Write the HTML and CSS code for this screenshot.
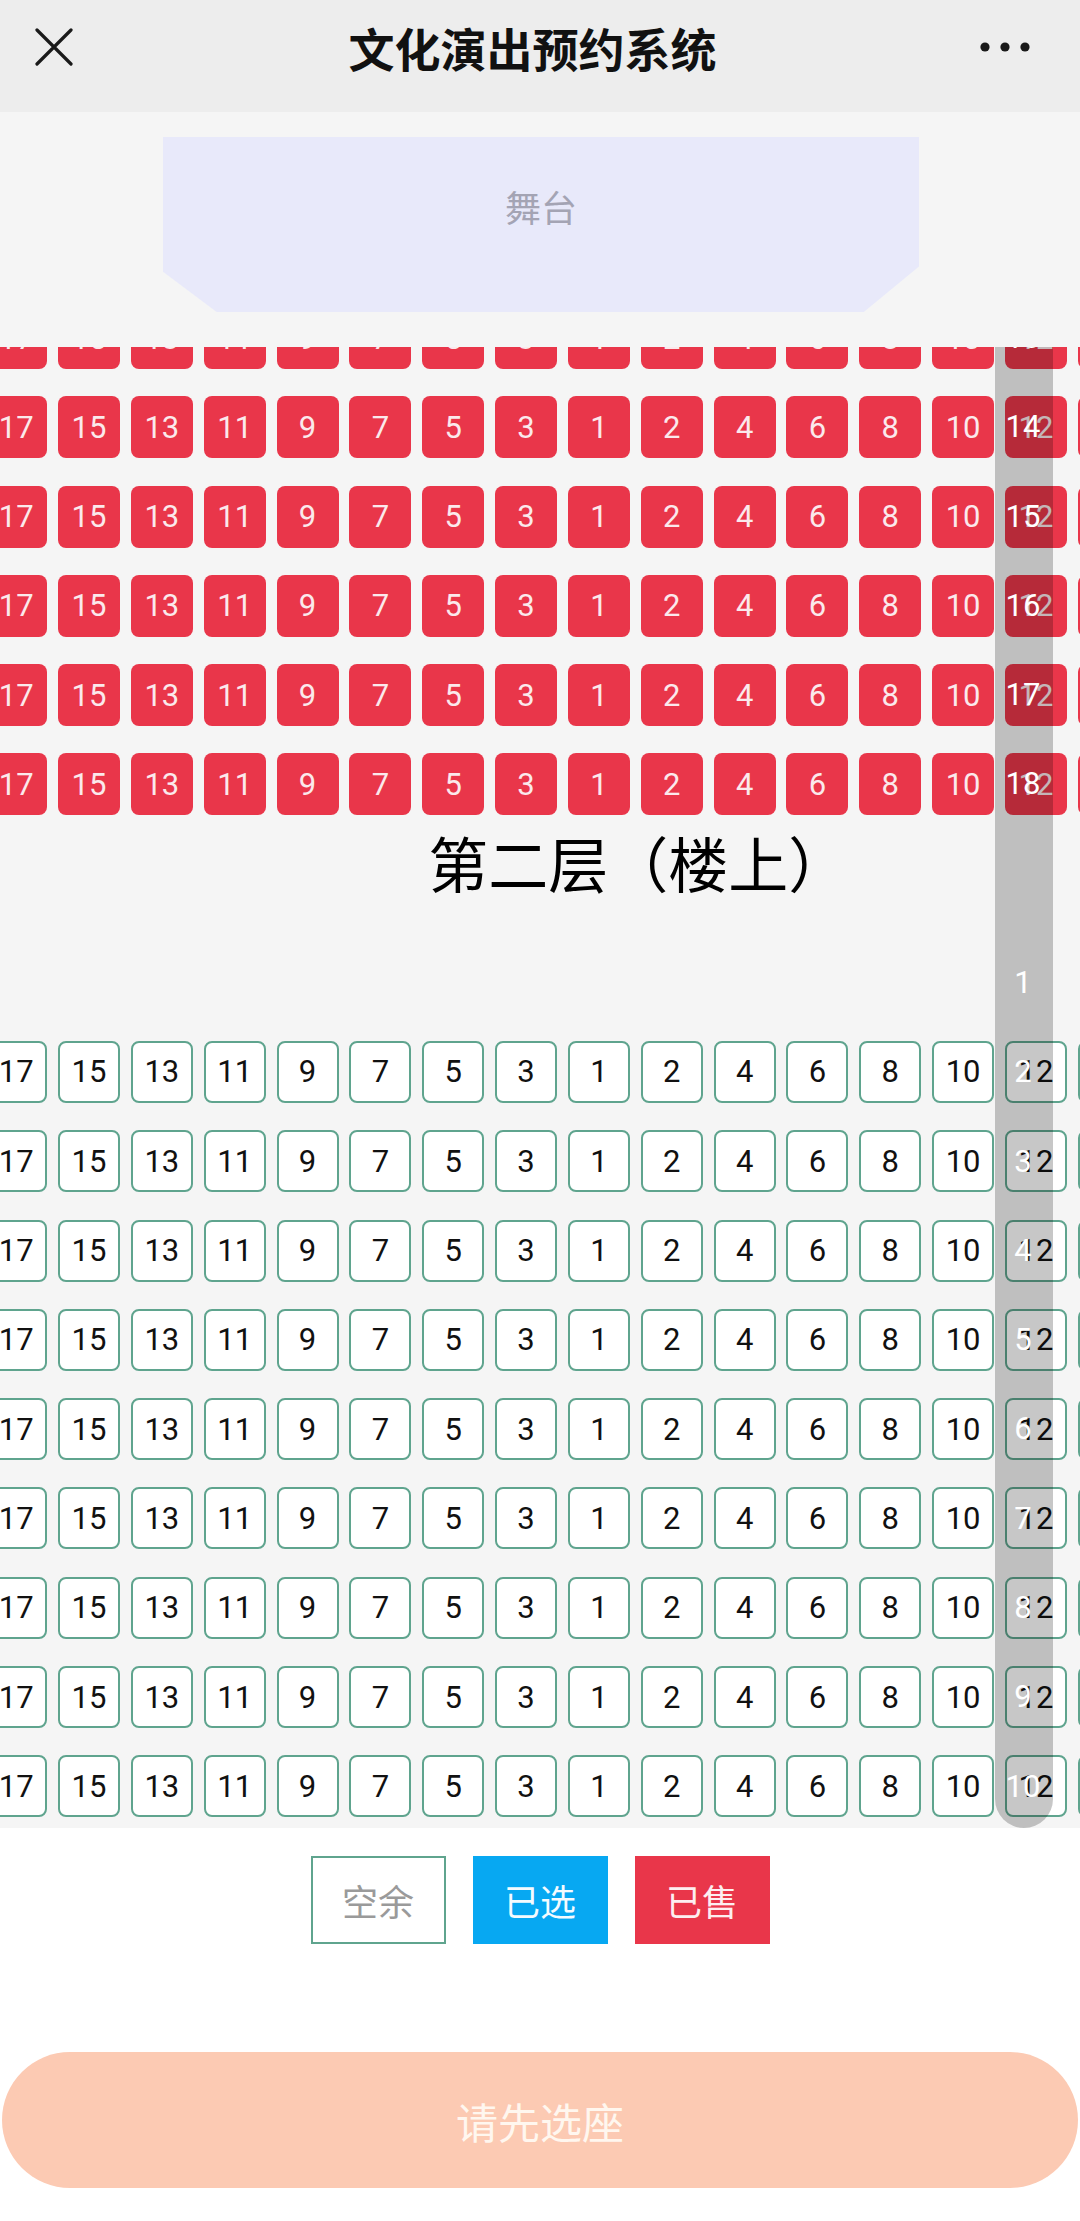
FILE: index.html
```html
<!DOCTYPE html>
<html lang="zh-CN">
<head>
<meta charset="utf-8">
<title>文化演出预约系统</title>
<link rel="stylesheet" href="styles.css">
</head>
<body>
<header class="topbar">
  <div class="topbar-row">
    <div class="topbar-left">
      <svg class="icon-close" viewBox="0 0 38 38" width="38" height="38"><path d="M2 2 L36 36 M36 2 L2 36" stroke="#1a1a1a" stroke-width="3.2" fill="none" stroke-linecap="round"/></svg>
    </div>
    <h1 class="title">文化演出预约系统</h1>
    <div class="topbar-right">
      <svg class="icon-more" viewBox="0 0 50 12" width="50" height="12"><circle cx="5" cy="6" r="4.6" fill="#1a1a1a"/><circle cx="25" cy="6" r="4.6" fill="#1a1a1a"/><circle cx="45" cy="6" r="4.6" fill="#1a1a1a"/></svg>
    </div>
  </div>
</header>

<main class="page">
  <section class="stage-wrap">
    <div class="stage">舞台</div>
  </section>

  <section class="seatmap">
    <div class="seatmap-inner">
      <div class="block">
        <div class="row sold"><span>17</span><span>15</span><span>13</span><span>11</span><span>9</span><span>7</span><span>5</span><span>3</span><span>1</span><span>2</span><span>4</span><span>6</span><span>8</span><span>10</span><span>12</span><span>14</span></div>
        <div class="row sold"><span>17</span><span>15</span><span>13</span><span>11</span><span>9</span><span>7</span><span>5</span><span>3</span><span>1</span><span>2</span><span>4</span><span>6</span><span>8</span><span>10</span><span>12</span><span>14</span></div>
        <div class="row sold"><span>17</span><span>15</span><span>13</span><span>11</span><span>9</span><span>7</span><span>5</span><span>3</span><span>1</span><span>2</span><span>4</span><span>6</span><span>8</span><span>10</span><span>12</span><span>14</span></div>
        <div class="row sold"><span>17</span><span>15</span><span>13</span><span>11</span><span>9</span><span>7</span><span>5</span><span>3</span><span>1</span><span>2</span><span>4</span><span>6</span><span>8</span><span>10</span><span>12</span><span>14</span></div>
        <div class="row sold"><span>17</span><span>15</span><span>13</span><span>11</span><span>9</span><span>7</span><span>5</span><span>3</span><span>1</span><span>2</span><span>4</span><span>6</span><span>8</span><span>10</span><span>12</span><span>14</span></div>
        <div class="row sold"><span>17</span><span>15</span><span>13</span><span>11</span><span>9</span><span>7</span><span>5</span><span>3</span><span>1</span><span>2</span><span>4</span><span>6</span><span>8</span><span>10</span><span>12</span><span>14</span></div>
      </div>

      <h2 class="floor-title">第二层（楼上）</h2>

      <div class="block block-free">
        <div class="row free"><span>17</span><span>15</span><span>13</span><span>11</span><span>9</span><span>7</span><span>5</span><span>3</span><span>1</span><span>2</span><span>4</span><span>6</span><span>8</span><span>10</span><span>12</span><span>14</span></div>
        <div class="row free"><span>17</span><span>15</span><span>13</span><span>11</span><span>9</span><span>7</span><span>5</span><span>3</span><span>1</span><span>2</span><span>4</span><span>6</span><span>8</span><span>10</span><span>12</span><span>14</span></div>
        <div class="row free"><span>17</span><span>15</span><span>13</span><span>11</span><span>9</span><span>7</span><span>5</span><span>3</span><span>1</span><span>2</span><span>4</span><span>6</span><span>8</span><span>10</span><span>12</span><span>14</span></div>
        <div class="row free"><span>17</span><span>15</span><span>13</span><span>11</span><span>9</span><span>7</span><span>5</span><span>3</span><span>1</span><span>2</span><span>4</span><span>6</span><span>8</span><span>10</span><span>12</span><span>14</span></div>
        <div class="row free"><span>17</span><span>15</span><span>13</span><span>11</span><span>9</span><span>7</span><span>5</span><span>3</span><span>1</span><span>2</span><span>4</span><span>6</span><span>8</span><span>10</span><span>12</span><span>14</span></div>
        <div class="row free"><span>17</span><span>15</span><span>13</span><span>11</span><span>9</span><span>7</span><span>5</span><span>3</span><span>1</span><span>2</span><span>4</span><span>6</span><span>8</span><span>10</span><span>12</span><span>14</span></div>
        <div class="row free"><span>17</span><span>15</span><span>13</span><span>11</span><span>9</span><span>7</span><span>5</span><span>3</span><span>1</span><span>2</span><span>4</span><span>6</span><span>8</span><span>10</span><span>12</span><span>14</span></div>
        <div class="row free"><span>17</span><span>15</span><span>13</span><span>11</span><span>9</span><span>7</span><span>5</span><span>3</span><span>1</span><span>2</span><span>4</span><span>6</span><span>8</span><span>10</span><span>12</span><span>14</span></div>
        <div class="row free"><span>17</span><span>15</span><span>13</span><span>11</span><span>9</span><span>7</span><span>5</span><span>3</span><span>1</span><span>2</span><span>4</span><span>6</span><span>8</span><span>10</span><span>12</span><span>14</span></div>
      </div>
    </div>

    <div class="rowbar">
      <div class="rowbar-list">
        <span>13</span><span>14</span><span>15</span><span>16</span><span>17</span><span>18</span>
        <span class="gap-after">1</span>
        <span>2</span><span>3</span><span>4</span><span>5</span><span>6</span><span>7</span><span>8</span><span>9</span><span>10</span>
      </div>
    </div>
  </section>

  <section class="legend">
    <div class="legend-item legend-free">空余</div>
    <div class="legend-item legend-picked">已选</div>
    <div class="legend-item legend-sold">已售</div>
  </section>

  <div class="submit-wrap">
    <button class="submit" type="button">请先选座</button>
  </div>
</main>
</body>
</html>
```
FILE: styles.css
```css
* { box-sizing: border-box; }

html, body {
  margin: 0;
  padding: 0;
  background: #ffffff;
  font-family: "Noto Sans CJK SC", "Noto Sans", sans-serif;
  width: 1080px;
}

.topbar {
  height: 112px;
  background: #ededed;
}

.topbar-row {
  height: 94px;
  display: grid;
  grid-template-columns: 1fr auto 1fr;
  align-items: center;
  padding: 0 50px 0 35px;
}

.topbar-left { display: flex; justify-content: flex-start; }
.topbar-right { display: flex; justify-content: flex-end; }

.icon-close { display: block; }
.icon-more { display: block; }

.title {
  margin: 0;
  font-size: 46px;
  font-weight: 700;
  color: #111;
  line-height: 1;
  text-align: center;
}

.page {
  background: #ffffff;
}

.stage-wrap {
  background: #f5f5f5;
  padding: 25px 0 35px 163px;
}

.stage {
  width: 756px;
  height: 175px;
  background: #e8e9fa;
  clip-path: polygon(0 0, 100% 0, 100% 74%, 92.7% 100%, 7.1% 100%, 0 77%);
  color: #a4a4b4;
  font-size: 36px;
  text-align: center;
  padding-top: 44px;
  line-height: 50px;
}

.seatmap {
  position: relative;
  height: 1481px;
  overflow: hidden;
  background: #f5f5f5;
}

.seatmap-inner {
  margin-top: -40px;
  margin-left: -14.85px;
  width: 1200px;
}

.block {
  display: flex;
  flex-direction: column;
  gap: 27.3px;
}

.row {
  display: flex;
  gap: 10.85px;
}

.row span {
  flex: 0 0 62px;
  width: 62px;
  height: 62px;
  border-radius: 8px;
  display: flex;
  align-items: center;
  justify-content: center;
  font-family: Roboto, "Noto Sans", sans-serif;
  font-size: 31px;
}

.row.sold span {
  background: #e9364a;
  color: #fbe9ec;
}

.row.free span {
  background: #ffffff;
  border: 2px solid #5fa48e;
  color: #111;
}

.floor-title {
  margin: 14px 0 0 0;
  height: 65px;
  line-height: 65px;
  font-size: 60px;
  font-weight: 400;
  color: #000;
  padding-left: 443px;
  white-space: nowrap;
}

.block-free {
  margin-top: 146.5px;
}

.rowbar {
  position: absolute;
  top: 0;
  bottom: 0;
  right: 27px;
  width: 58px;
  background: rgba(0, 0, 0, 0.22);
  border-radius: 0 0 29px 29px;
  overflow: hidden;
}

.rowbar-list {
  margin-top: -40px;
  display: flex;
  flex-direction: column;
  gap: 27.3px;
}

.rowbar-list span {
  height: 62px;
  line-height: 62px;
  text-align: center;
  color: #ffffff;
  font-family: Roboto, "Noto Sans", sans-serif;
  font-size: 31px;
  padding-right: 2px;
}

.rowbar-list .gap-after {
  margin-top: 109.2px;
}

.legend {
  display: flex;
  justify-content: center;
  gap: 27px;
  padding-top: 28px;
  height: 224px;
}

.legend-item {
  width: 135px;
  height: 88px;
  display: flex;
  align-items: center;
  justify-content: center;
  font-size: 36px;
}

.legend-free {
  border: 2px solid #5fa48e;
  color: #9a9a9a;
  background: #fff;
}

.legend-picked {
  background: #07a8f2;
  color: #f4fbff;
}

.legend-sold {
  background: #e9364a;
  color: #fdeef0;
}

.submit-wrap {
  padding: 0 2px;
}

.submit {
  display: block;
  width: 100%;
  height: 136px;
  border: none;
  border-radius: 68px;
  background: #fccab3;
  color: #fff7ef;
  font-family: "Noto Sans CJK SC", "Noto Sans", sans-serif;
  font-size: 42px;
  padding: 0;
}
```
